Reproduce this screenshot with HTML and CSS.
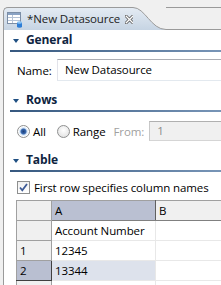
FILE: index.html
```html
<!DOCTYPE html>
<html>
<head>
<meta charset="utf-8">
<link rel="stylesheet" href="styles.css">
</head>
<body>
<div class="editor">
  <div class="tabbar">
    <div class="tab">
      <svg class="tab-icon" width="16" height="16" viewBox="0 0 16 16">
        <rect x="0.5" y="0.5" width="13" height="11" fill="#fff" stroke="#7c8ea6"/>
        <rect x="1" y="1" width="12" height="2" fill="#8aa3c4"/>
        <line x1="1" y1="5.5" x2="13" y2="5.5" stroke="#b5c3d6"/>
        <line x1="1" y1="8.5" x2="13" y2="8.5" stroke="#b5c3d6"/>
        <line x1="5.5" y1="3" x2="5.5" y2="11" stroke="#b5c3d6"/>
        <path d="M10 10.5 v4 a2.5 1.2 0 0 0 5 0 v-4 z" fill="#2f7ed6"/>
        <ellipse cx="12.5" cy="10.5" rx="2.5" ry="1.2" fill="#8cc4f5"/>
      </svg>
      <span class="tab-title">*New Datasource</span>
      <svg class="tab-close" width="9" height="9" viewBox="0 0 9 9">
        <path d="M1.2 1.2 L7.8 7.8 M7.8 1.2 L1.2 7.8" stroke="#5c5c5c" stroke-width="3" stroke-linecap="square"/>
        <path d="M1.2 1.2 L7.8 7.8 M7.8 1.2 L1.2 7.8" stroke="#ffffff" stroke-width="1.3" stroke-linecap="square"/>
      </svg>
    </div>
    <svg class="tab-curve" width="33" height="30" viewBox="0 0 33 30">
      <defs>
        <linearGradient id="tg" x1="0" y1="0" x2="0" y2="1">
          <stop offset="0" stop-color="#e4ebf3"/>
          <stop offset="1" stop-color="#c6d4e3"/>
        </linearGradient>
      </defs>
      <path d="M0 7.5 C12 7.5 18 29.5 33 29.5 L33 30 L0 30 Z" fill="url(#tg)"/>
      <path d="M0 7.5 C12 7.5 18 29.5 33 29.5" fill="none" stroke="#9a9a9a"/>
    </svg>
    <div class="tab-rest"></div>
  </div>
  <div class="content">
    <div class="sec-head first"><span class="twisty"></span><span class="sec-title">General</span></div>
    <div class="sec-line"></div>
    <div class="row name-row">
      <span class="label">Name:</span>
      <div class="field">New Datasource</div>
    </div>

    <div class="sec-head"><span class="twisty"></span><span class="sec-title">Rows</span></div>
    <div class="sec-line"></div>
    <div class="row radio-row">
      <span class="radio checked"></span><span class="opt">All</span>
      <span class="radio"></span><span class="opt">Range</span>
      <span class="label disabled">From:</span>
      <div class="field field-disabled">1</div>
    </div>

    <div class="sec-head"><span class="twisty"></span><span class="sec-title">Table</span></div>
    <div class="sec-line"></div>
    <div class="row check-row">
      <span class="checkbox">
        <svg width="11" height="11" viewBox="0 0 11 11"><path d="M2 5.5 L4.3 8.3 L9 2" fill="none" stroke="#3d5a96" stroke-width="1.8"/></svg>
      </span>
      <span class="opt">First row specifies column names</span>
    </div>

    <table class="grid">
      <tr class="hdr">
        <td class="rh corner"></td>
        <td class="ch sel-col">A</td>
        <td class="ch">B</td>
      </tr>
      <tr>
        <td class="rh"></td>
        <td class="cell">Account Number</td>
        <td class="cell"></td>
      </tr>
      <tr>
        <td class="rh">1</td>
        <td class="cell">12345</td>
        <td class="cell"></td>
      </tr>
      <tr class="sel-row">
        <td class="rh">2</td>
        <td class="cell sel-cell">13344</td>
        <td class="cell"></td>
      </tr>
      <tr>
        <td class="rh"></td>
        <td class="cell"></td>
        <td class="cell"></td>
      </tr>
    </table>
  </div>
</div>
</body>
</html>
```

FILE: styles.css
```css
html, body {
  margin: 0;
  padding: 0;
}
body {
  width: 221px;
  height: 285px;
  overflow: hidden;
  background: #f0f0f0;
  font-family: "Open Sans", "DejaVu Sans", sans-serif;
  font-size: 11.5px;
  letter-spacing: -0.1px;
  color: #000;
}
.editor {
  width: 221px;
  height: 285px;
  display: flex;
  flex-direction: column;
}
.tabbar {
  height: 30px;
  display: flex;
  flex: none;
  background: #f0f0f0;
}
.tab {
  margin-left: 3px;
  margin-top: 7px;
  width: 129px;
  height: 22px;
  border-top: 1px solid #9a9a9a;
  border-left: 1px solid #9a9a9a;
  border-top-left-radius: 5px;
  background: linear-gradient(#e4ebf3, #c6d4e3);
  display: flex;
  align-items: center;
  box-sizing: content-box;
  flex: none;
}
.tab-icon {
  margin-left: 3px;
  margin-top: 2px;
  flex: none;
}
.tab-title {
  margin-left: 4px;
  color: #222;
  white-space: nowrap;
  line-height: 16px;
  flex: none;
}
.tab-close {
  margin-left: 5px;
  margin-top: 1px;
  flex: none;
}
.tab-curve {
  flex: none;
  display: block;
}
.tab-rest {
  flex: 1;
  margin-top: 7px;
  height: 21px;
  border-top: 1px solid #9a9a9a;
  border-bottom: 1px solid #9a9a9a;
}
.content {
  flex: 1;
  margin-left: 3px;
  border-left: 1px solid #9a9a9a;
  background: #fff;
  display: flex;
  flex-direction: column;
  overflow: hidden;
}
.sec-head {
  display: flex;
  align-items: center;
  height: 16px;
  margin-top: 2px;
  padding-left: 9px;
  flex: none;
}
.twisty {
  width: 0;
  height: 0;
  border-left: 3.5px solid transparent;
  border-right: 3.5px solid transparent;
  border-top: 4px solid #1f4f82;
  margin-top: 1px;
}
.sec-title {
  margin-left: 7px;
  font-weight: bold;
  font-size: 12px;
  color: #0e2440;
  line-height: 16px;
}
.sec-line {
  margin-left: 6px;
  margin-top: 2px;
  height: 2px;
  flex: none;
  background: linear-gradient(to right, #36587f, #7895b7);
}
.row {
  display: flex;
  align-items: center;
  padding-left: 13px;
  white-space: nowrap;
  flex: none;
}
.name-row {
  margin-top: 7px;
  height: 22px;
  margin-bottom: 9px;
}
.label {
  width: 40px;
  flex: none;
}
.field {
  flex: none;
  width: 180px;
  height: 20px;
  line-height: 20px;
  border: 1px solid;
  border-color: #abadb3 #dbdfe6 #e3e9ef #e2e3ea;
  padding-left: 7px;
  box-sizing: content-box;
}
.radio-row {
  margin-top: 9px;
  height: 20px;
  margin-bottom: 9px;
}
.radio {
  width: 11px;
  height: 11px;
  border: 1px solid #8e8f8f;
  border-radius: 50%;
  background: radial-gradient(circle at 50% 40%, #ffffff, #dcdcdc);
  flex: none;
}
.radio.checked {
  background: radial-gradient(circle, #1b3d78 0, #3b6bb2 2.5px, #cfe1f5 3.5px, #ffffff 5px);
}
.opt {
  margin-left: 3px;
  margin-right: 11px;
}
.label.disabled {
  color: #a0a0a0;
  width: auto;
  margin-left: -3px;
  margin-right: 5px;
}
.field-disabled {
  height: 18px;
  line-height: 18px;
  background: #f0f0f0;
  border-color: #b0b0b0 #d5d5d5 #d5d5d5 #c8c8c8;
  color: #8a8a8a;
}
.check-row {
  margin-top: 7px;
  height: 16px;
}
.checkbox {
  width: 11px;
  height: 11px;
  border: 1px solid #8e8f8f;
  background: linear-gradient(#f0f0f0, #ffffff);
  display: flex;
  align-items: center;
  justify-content: center;
  flex: none;
}
.checkbox svg {
  display: block;
}
.check-row .opt {
  margin-left: 4px;
}
.grid {
  margin-top: 5px;
  margin-left: 12px;
  border-collapse: collapse;
  table-layout: fixed;
  width: 230px;
  flex: none;
}
.grid tr {
  height: 20px;
}
.grid td {
  padding: 0 0 0 3px;
  white-space: nowrap;
  overflow: hidden;
  line-height: 18px;
}
.grid .rh {
  width: 31px;
  background: #f0f0f0;
  border: 1px solid #a0a0a0;
}
.grid .ch {
  background: #f0f0f0;
  border: 1px solid #a0a0a0;
  border-bottom-color: #808080;
}
.grid .hdr .ch:nth-child(2) {
  width: 100px;
}
.grid .sel-col {
  background: #bac0d2;
  border-right-color: #606060;
}
.grid .cell {
  border: 1px solid #e8e8e8;
}
.grid tr td:nth-child(2).cell {
  border-left-color: #a0a0a0;
}
.grid .sel-row .rh {
  background: #b9bfd1;
  border-bottom-color: #404040;
  border-right-color: #404040;
}
.grid .sel-cell {
  background: #dde2ec;
}
```
